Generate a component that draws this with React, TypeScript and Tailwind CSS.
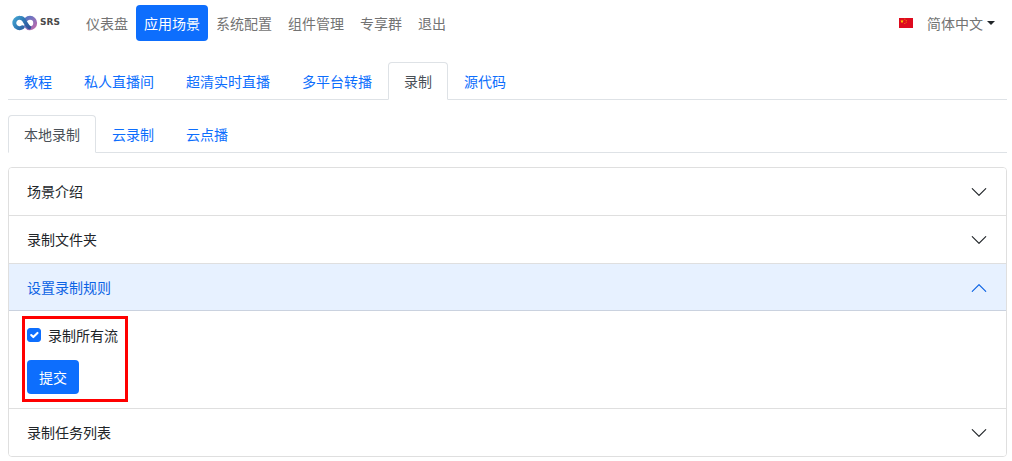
import React, { useState } from 'react';
import clsx from 'clsx';

const navItems = ['仪表盘', '应用场景', '系统配置', '组件管理', '专享群', '退出'];
const scenarioTabs = ['教程', '私人直播间', '超清实时直播', '多平台转播', '录制', '源代码'];
const recordTabs = ['本地录制', '云录制', '云点播'];

const Logo: React.FC = () => (
  <svg width="48" height="20" viewBox="0 0 48 20" role="img" aria-label="SRS">
    <defs>
      <linearGradient id="srs-left" gradientUnits="userSpaceOnUse" x1="2" y1="4" x2="17" y2="15">
        <stop offset="0" stopColor="#45a5d2" />
        <stop offset="0.5" stopColor="#2f78b4" />
        <stop offset="1" stopColor="#2f5298" />
      </linearGradient>
      <linearGradient id="srs-right" gradientUnits="userSpaceOnUse" x1="12" y1="5" x2="23" y2="15">
        <stop offset="0" stopColor="#4c74c4" />
        <stop offset="0.5" stopColor="#8273bd" />
        <stop offset="1" stopColor="#b968ac" />
      </linearGradient>
    </defs>
    <g fill="none" strokeWidth="3.9" strokeLinecap="round">
      <path stroke="url(#srs-right)" d="M14.200 6.400C15.200 5.400 16.500 4.800 18 4.800a5.200 5.200 0 0 1 0 10.400c-1.700 0-3-.8-4-2.200" />
      <path stroke="url(#srs-left)" d="M10.600 14.200a5.200 5.200 0 1 1-2.800-9.400c1.900 0 3.200.9 4.200 2.400l2.600 4.300c.8 1.300 1.400 2.200 2.600 2.900" />
    </g>
    <text x="28" y="12" fontSize="9" fontWeight="700" fontFamily="DejaVu Sans, sans-serif" fill="#4a4a4a">SRS</text>
  </svg>
);

const Flag: React.FC = () => (
  <svg width="14" height="10" viewBox="0 0 14 10" aria-hidden="true">
    <path fill="#de0a1e" d="M0 0h14v10H0z" />
    <path fill="#ffde00" d="m3 1.500.5 1.300h1.300l-1.100.8.4 1.300L3 4.100l-1.100.8.4-1.300-1.100-.8h1.300z" />
    <path fill="#ffde00" d="M5.500.800h.7v.7h-.7zM6.800 2h.7v.7h-.7zM6.800 3.800h.7v.7h-.7zM5.500 5h.7v.7h-.7z" />
  </svg>
);

const Tabs: React.FC<{ items: string[]; initial: string }> = ({ items, initial }) => {
  const [active, setActive] = useState(initial);

  return (
    <div role="tablist" className="flex border-b border-[#dee2e6]">
      {items.map((item) => (
        <button
          key={item}
          type="button"
          role="tab"
          aria-selected={item === active}
          onClick={() => setActive(item)}
          className={clsx(
            '-mb-px h-[38px] rounded-t border px-[15px]',
            item === active
              ? 'border-[#dee2e6] border-b-white bg-white text-[#495057]'
              : 'border-transparent text-[#0d6efd]',
          )}
        >
          {item}
        </button>
      ))}
    </div>
  );
};

interface PanelProps {
  title: string;
  defaultOpen?: boolean;
  children?: React.ReactNode;
}

const Panel: React.FC<PanelProps> = ({ title, defaultOpen = false, children }) => {
  const [open, setOpen] = useState(defaultOpen);

  return (
    <section>
      <h2>
        <button
          type="button"
          aria-expanded={open}
          onClick={() => setOpen(!open)}
          className={clsx(
            'flex w-full items-center justify-between px-[18px] py-3 text-left leading-[23px]',
            open
              ? 'bg-[#e7f1ff] text-[#0c63e4] shadow-[inset_0_-1px_0_rgba(0,0,0,0.125)]'
              : 'bg-white text-[#212529]',
          )}
        >
          {title}
          <svg width="18" height="18" viewBox="0 0 16 16" fill="currentColor" className={clsx(open && 'rotate-180')} aria-hidden="true">
            <path fillRule="evenodd" d="M1.646 4.646a.5.5 0 0 1 .708 0L8 10.293l5.646-5.647a.5.5 0 0 1 .708.708l-6 6a.5.5 0 0 1-.708 0l-6-6a.5.5 0 0 1 0-.708z" />
          </svg>
        </button>
      </h2>
      {open && children}
    </section>
  );
};

const RecordRules: React.FC = () => {
  const [recordAll, setRecordAll] = useState(true);

  return (
    <form onSubmit={(e) => e.preventDefault()} className="relative px-[18px] py-[14px]">
      <div className="mb-4 flex h-[19px] items-center gap-[7px]">
        <span className="relative flex">
          <input
            id="record-all"
            type="checkbox"
            checked={recordAll}
            onChange={(e) => setRecordAll(e.target.checked)}
            className="h-[14px] w-[14px] appearance-none rounded-[3px] border border-[#bfbfbf] checked:border-[#0d6efd] checked:bg-[#0d6efd]"
          />
          {recordAll && (
            <svg viewBox="0 0 20 20" className="pointer-events-none absolute inset-0" aria-hidden="true">
              <path fill="none" stroke="#fff" strokeLinecap="round" strokeLinejoin="round" strokeWidth="3" d="m6 10 3 3 6-6" />
            </svg>
          )}
        </span>
        <label htmlFor="record-all">录制所有流</label>
      </div>
      <button type="submit" className="block h-[34px] rounded bg-[#0d6efd] px-3 text-white">提交</button>
      {/* Highlight around the form controls */}
      <div className="pointer-events-none absolute top-[5px] left-[13px] h-[86px] w-[106px] border-3 border-[#ff0000]" />
    </form>
  );
};

const App: React.FC = () => {
  const [page, setPage] = useState('应用场景');

  return (
    <div className="bg-white pr-[5px] pb-1 pl-2 font-['Noto_Sans_CJK_SC',sans-serif] text-sm text-[#212529]">
      <header className="flex items-center pt-[5px]">
        <a href="#home" className="mr-[18px] ml-1"><Logo /></a>
        <nav className="flex">
          {navItems.map((item) => (
            <a
              key={item}
              href="#nav"
              onClick={() => setPage(item)}
              className={clsx(
                'flex h-9 items-center rounded px-2',
                item === page ? 'bg-[#0d6efd] text-white' : 'text-[#737373]',
              )}
            >
              {item}
            </a>
          ))}
        </nav>
        <button type="button" className="mr-3 ml-auto flex items-center text-[#737373]">
          <Flag />
          <span className="mr-1 ml-[14px]">简体中文</span>
          <svg width="8" height="4" viewBox="0 0 8 4" aria-hidden="true">
            <path fill="#212529" d="M0 0h8L4 4z" />
          </svg>
        </button>
      </header>

      <main className="mt-[21px]">
        <div className="mb-[14px] flex flex-col gap-[15px]">
          <Tabs items={scenarioTabs} initial="录制" />
          <Tabs items={recordTabs} initial="本地录制" />
        </div>
        <div className="divide-y divide-[#dfdfdf] overflow-hidden rounded border border-[#dfdfdf]">
          <Panel title="场景介绍" />
          <Panel title="录制文件夹" />
          <Panel title="设置录制规则" defaultOpen>
            <RecordRules />
          </Panel>
          <Panel title="录制任务列表" />
        </div>
      </main>
    </div>
  );
};

export default App;
